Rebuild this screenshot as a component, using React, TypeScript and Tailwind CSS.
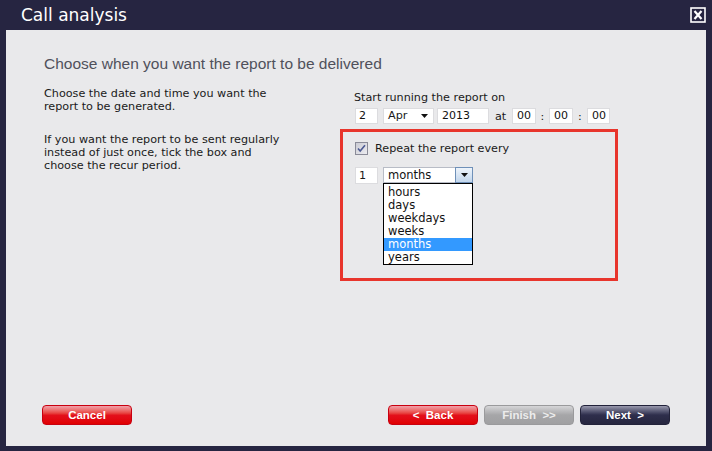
import React from 'react';

const units = ['hours', 'days', 'weekdays', 'weeks', 'months', 'years'];

function CloseBox() {
  return (
    <svg width="16" height="16" viewBox="0 0 16 16" className="block">
      <rect x="1" y="1" width="14" height="14" fill="none" stroke="#fff" strokeWidth="1.6" />
      <path d="M4.5 4 L11.5 12 M11.5 4 L4.5 12" stroke="#fff" strokeWidth="2.2" />
    </svg>
  );
}

function Caret() {
  return (
    <svg width="7" height="4" viewBox="0 0 7 4" className="block">
      <path d="M0 0 H7 L3.5 4 Z" fill="#111" />
    </svg>
  );
}

function Checkbox() {
  return (
    <svg width="13" height="13" viewBox="0 0 13 13" className="block shrink-0">
      <defs>
        <linearGradient id="cb" x1="0" y1="0" x2="1" y2="1">
          <stop offset="0" stopColor="#c9cad2" />
          <stop offset="1" stopColor="#eeeef2" />
        </linearGradient>
      </defs>
      <rect x="0.5" y="0.5" width="12" height="12" fill="url(#cb)" stroke="#8a8b98" />
      <path d="M3 6.5 L5.2 9 L10 3.2" fill="none" stroke="#4c5a92" strokeWidth="1.6" />
    </svg>
  );
}

function Field({ value, className }: { value: string; className: string }) {
  return (
    <div className={`h-[16px] bg-white border border-[#dcdcdf] leading-[14px] text-[11px] text-[#111] ${className}`}>
      {value}
    </div>
  );
}

function WizardButton({ label, tone }: { label: string; tone: 'red' | 'gray' | 'navy' }) {
  const tones = {
    red: 'bg-linear-to-b from-[#f0a0aa] via-[#e3101c] via-50% to-[#e00000] border-[#c80010] text-white',
    gray: 'bg-linear-to-b from-[#d6d6d8] via-[#a6a6a8] via-50% to-[#a0a0a2] border-[#9a9a9c] text-[#ececec]',
    navy: 'bg-linear-to-b from-[#9a9aae] via-[#2e2e4c] via-50% to-[#26263f] border-[#22223a] text-white',
  };
  return (
    <div
      className={`w-[90px] h-[20px] rounded-[4px] border flex items-center justify-center pt-[2px] whitespace-pre text-[11.5px] font-bold font-['Liberation_Sans',Arial,sans-serif] ${tones[tone]}`}
    >
      {label}
    </div>
  );
}

export default function App() {
  return (
    <div className="w-[712px] h-[451px] bg-[#262541] flex flex-col font-['DejaVu_Sans',Verdana,sans-serif]">
      <div className="h-[30px] flex items-center justify-between pl-[21px] pr-[6px]">
        <span className="text-white text-[17px] leading-none">Call analysis</span>
        <CloseBox />
      </div>

      <div className="mx-[6px] h-[416px] bg-[#e9e9eb] flex flex-col pt-[24px] pb-[21px]">
        <h1 className="pl-[38px] text-[15.5px] leading-[19px] text-[#50515b] font-['Liberation_Sans',Arial,sans-serif]">
          Choose when you want the report to be delivered
        </h1>

        <div className="flex mt-[14px] text-[11.2px] leading-[13px] text-[#1a1a1a]">
          <div className="w-[334px] pl-[38px]">
            <p>
              Choose the date and time you want the
              <br />
              report to be generated.
            </p>
            <p className="mt-[20px]">
              If you want the report to be sent regularly
              <br />
              instead of just once, tick the box and
              <br />
              choose the recur period.
            </p>
          </div>

          <div className="w-[278px] pt-[4px]">
            <div className="pl-[14px]">Start running the report on</div>
            <div className="pl-[15px] mt-[4px] flex items-center h-[16px]">
              <Field value="2" className="w-[23px] pl-[3px]" />
              <div className="ml-[5px] w-[51px] h-[16px] bg-white border border-[#dcdcdf] flex items-center justify-between pl-[4px] pr-[5px]">
                <span className="leading-[14px]">Apr</span>
                <Caret />
              </div>
              <Field value="2013" className="ml-[3px] w-[52px] pl-[4px]" />
              <span className="w-[23px] text-center">at</span>
              <Field value="00" className="w-[24px] pl-[4px]" />
              <span className="w-[13px] text-center">:</span>
              <Field value="00" className="w-[24px] pl-[4px]" />
              <span className="w-[14px] text-center">:</span>
              <Field value="00" className="w-[23px] pl-[4px]" />
            </div>

            <div className="mt-[5px] h-[152px] border-[3px] border-[#e8352c] px-[12px] pt-[10px]">
              <div className="flex items-center h-[13px] gap-[7px]">
                <Checkbox />
                <span>Repeat the report every</span>
              </div>
              <div className="mt-[12px] flex items-start">
                <div className="w-[23px] h-[17px] bg-white border border-[#dcdcdf] pl-[3px] leading-[15px]">1</div>
                <div className="relative ml-[5px] w-[90px] h-[16px] bg-white border border-[#b8bcc6] flex">
                  <span className="flex-1 pl-[4px] text-[11.5px] leading-[14px] text-[#111]">months</span>
                  <div className="w-[18px] border border-[#6f90b8] bg-linear-to-b from-[#eef4fb] to-[#c2d6ec] flex items-center justify-center -my-px -mr-px h-[16px]">
                    <Caret />
                  </div>
                  <ul className="absolute left-[-1px] top-[15px] w-[90px] pt-[2px] bg-white border border-black text-[11.5px] leading-[13px] text-[#111]">
                    {units.map((u) => (
                      <li key={u} className={`pl-[4px] h-[13px] ${u === 'months' ? 'bg-[#3399ff] text-white' : ''}`}>
                        {u}
                      </li>
                    ))}
                  </ul>
                </div>
              </div>
            </div>
          </div>
        </div>

        <div className="flex-1" />

        <div className="flex items-center justify-between px-[36px]">
          <WizardButton label="Cancel" tone="red" />
          <div className="flex gap-[6px]">
            <WizardButton label="<  Back" tone="red" />
            <WizardButton label="Finish  >>" tone="gray" />
            <WizardButton label="Next  >" tone="navy" />
          </div>
        </div>
      </div>
    </div>
  );
}
